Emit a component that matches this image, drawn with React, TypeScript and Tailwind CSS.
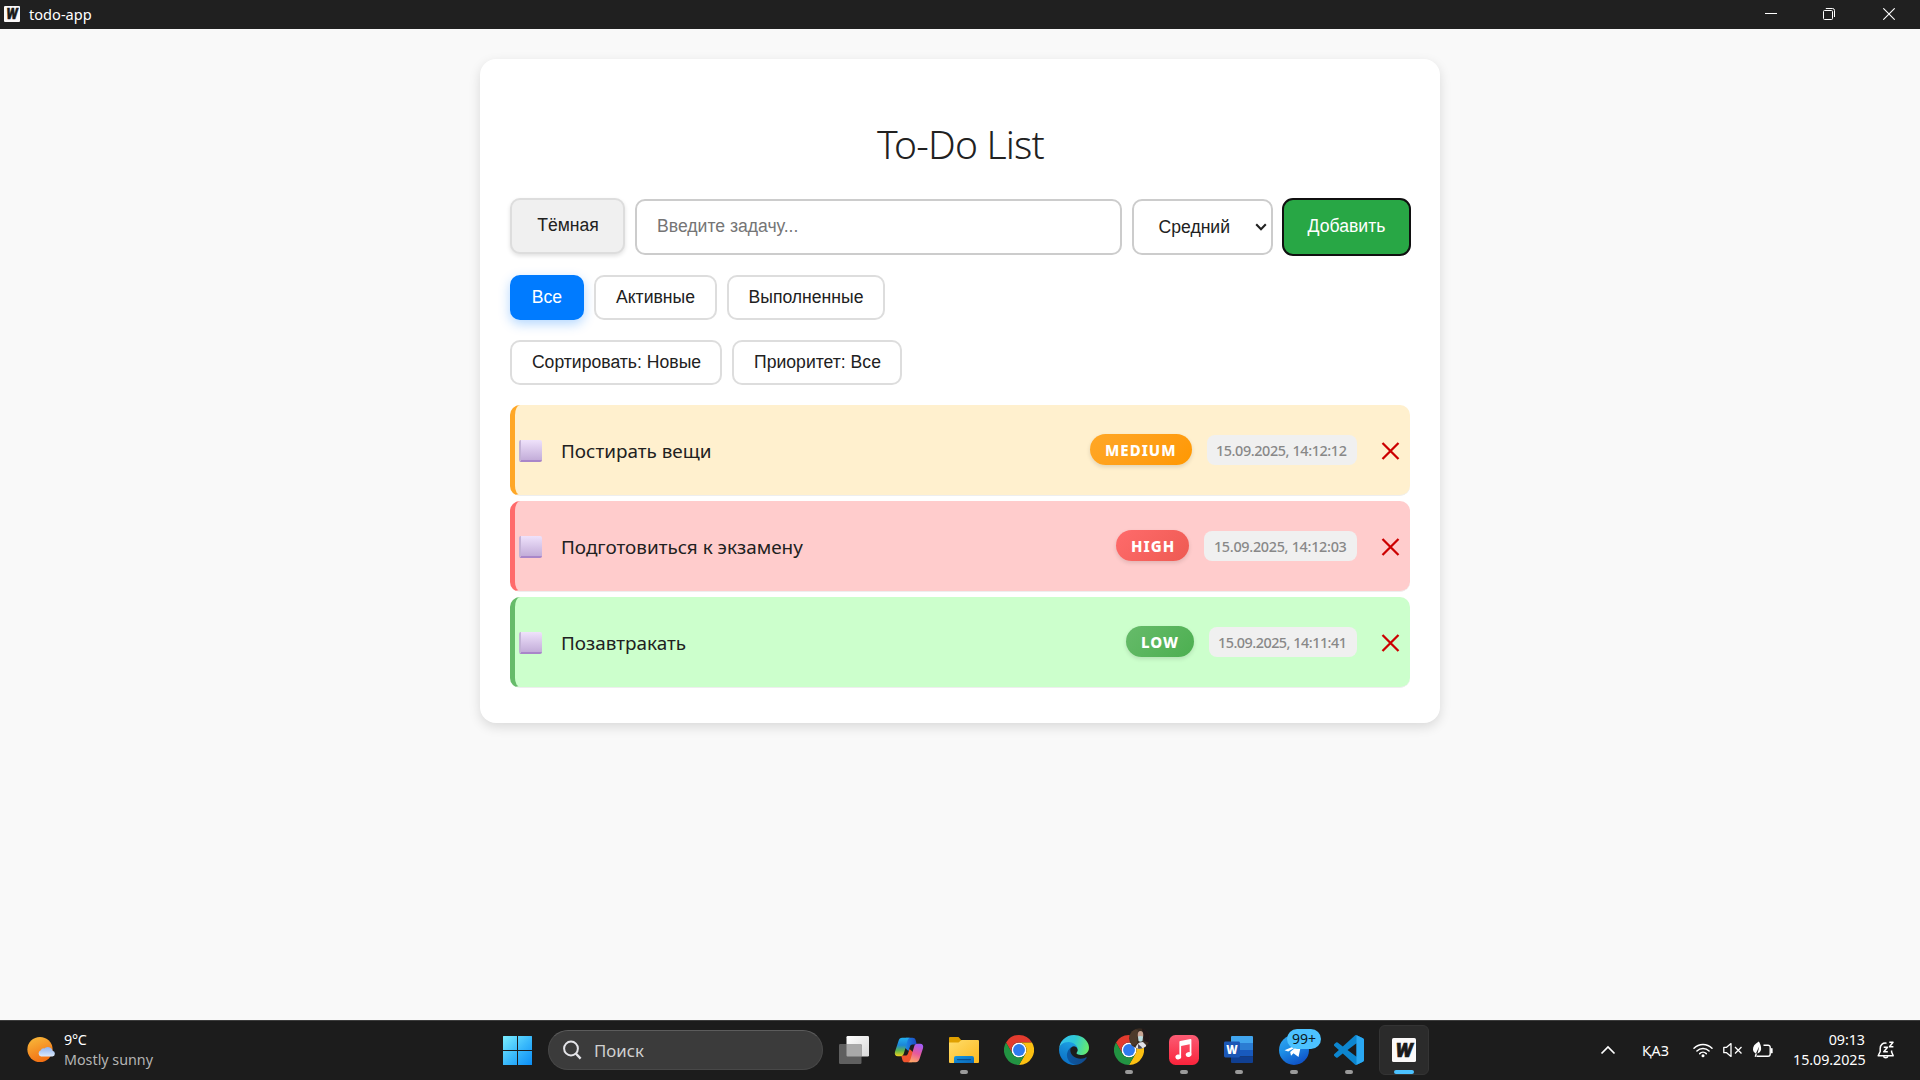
import type { ReactNode } from 'react';

type Task = {
  text: string;
  priority: string;
  date: string;
  row: string;
  badge: string;
  stamp: string;
};

const tasks: Task[] = [
  {
    text: 'Постирать вещи',
    priority: 'MEDIUM',
    date: '15.09.2025, 14:12:12',
    row: 'bg-[#fff0ce] border-l-[#ffa726]',
    badge: 'w-[102px] from-[#ffa726] to-[#ff9800] mr-[15px]',
    stamp: 'w-[150px] tracking-[-0.4px]',
  },
  {
    text: 'Подготовиться к экзамену',
    priority: 'HIGH',
    date: '15.09.2025, 14:12:03',
    row: 'bg-[#ffcccc] border-l-[#ff6b6b]',
    badge: 'w-[73px] from-[#ff6b6b] to-[#ee5a52] mr-[15px]',
    stamp: 'w-[153px] tracking-[-0.3px]',
  },
  {
    text: 'Позавтракать',
    priority: 'LOW',
    date: '15.09.2025, 14:11:41',
    row: 'bg-[#ccffcc] border-l-[#66bb6a]',
    badge: 'w-[68px] from-[#66bb6a] to-[#4caf50] mr-[15px]',
    stamp: 'w-[148px] tracking-[-0.5px]',
  },
];

function AppMark({ size }: { size: number }) {
  return (
    <svg width={size} height={size} viewBox="0 0 24 24">
      <rect width="24" height="24" rx="1.6" fill="#fbf9f9" />
      <text x="3.4" y="19.2" fontFamily="Roboto, sans-serif" fontSize="20.5" fontWeight="900" fontStyle="italic" textLength="17.4" lengthAdjust="spacingAndGlyphs" fill="#1a1a1a" stroke="#1a1a1a" strokeWidth="0.6">W</text>
    </svg>
  );
}

function TitleBar() {
  return (
    <header className="flex h-[29px] items-center bg-[#202020] text-white">
      <div className="ml-1 mt-[-1px]"><AppMark size={16} /></div>
      <span className="ml-[9px] pb-[2px] text-[14.6px] leading-[20px]">todo-app</span>
      <div className="ml-auto flex pb-px">
        <div className="grid w-[58px] place-items-center">
          <svg width="12" height="12" viewBox="0 0 12 12"><path d="M0 5.5H12" stroke="#fff" /></svg>
        </div>
        <div className="grid w-[58px] place-items-center">
          <svg width="12" height="12" viewBox="0 0 12 12" fill="none" stroke="#fff">
            <rect x="0.5" y="2.5" width="9" height="9" rx="1" />
            <path d="M2.8 0.5H9.5a2 2 0 0 1 2 2V9" />
          </svg>
        </div>
        <div className="grid w-[62px] place-items-center pr-px">
          <svg width="12" height="12" viewBox="0 0 12 12"><path d="M0.3 0.3L11.7 11.7M11.7 0.3L0.3 11.7" stroke="#fff" strokeWidth="1.1" /></svg>
        </div>
      </div>
    </header>
  );
}

function FilterButton({ children, className }: { children: ReactNode; className: string }) {
  return (
    <button className={`h-[45px] rounded-[10px] ${className}`}>{children}</button>
  );
}

function TaskRow({ task }: { task: Task }) {
  return (
    <li className={`flex h-[91px] items-center rounded-[10px] border-b border-l-[5px] border-b-[#eee] ${task.row}`}>
      <div className="mt-[2px] ml-1 h-[22px] w-[23px] rounded-[2px] border-b-2 border-l-2 border-b-[#a986c9] border-l-[#c3b2d6] bg-linear-to-b from-[#efe2fb] to-[#c3add9]" />
      <span className="mt-[2px] ml-[19px] text-[18.9px] leading-[26px]">{task.text}</span>
      <span className={`ml-auto mt-[-2px] flex h-[31px] items-center rounded-[16px] bg-linear-135 pt-[2px] pl-[15px] text-[15px] font-extrabold tracking-[1px] text-white shadow-[0_2px_4px_rgba(0,0,0,0.12)] ${task.badge}`}>
        {task.priority}
      </span>
      <span className={`mt-[-1px] flex h-[30px] items-center justify-end rounded-[8px] bg-[#f0f0f0] pt-[2px] pr-[10.5px] text-[14.4px] font-medium whitespace-nowrap text-[#888] ${task.stamp}`}>
        {task.date}
      </span>
      <svg className="mt-[2px] mr-[10px] ml-[24px]" width="19" height="18" viewBox="0 0 19 18">
        <path d="M1.5 1L17.5 17M17.5 1L1.5 17" stroke="#cc0000" strokeWidth="2.3" />
      </svg>
    </li>
  );
}

function TodoCard() {
  return (
    <section className="mx-auto mt-[30px] h-[664px] w-[960px] rounded-[16px] bg-white px-[30px] text-[#212121] shadow-[0_4px_12px_rgba(0,0,0,0.13)]">
      <h1 className="flex h-[139px] items-center justify-center pt-[32px] pl-px text-[39px] font-[270] tracking-[-0.8px]">To-Do List</h1>
      <div className="-mr-px flex h-[58px] font-['Liberation_Sans',Arial,sans-serif] text-[17.6px]">
        <button className="mr-[10px] h-[56px] w-[115px] rounded-[10px] border-2 border-[#ddd] bg-[#f0f0f0] pb-px pl-px shadow-[0_2px_4px_rgba(0,0,0,0.12)]">Тёмная</button>
        <input className="mt-px mr-[10px] h-14 w-[487px] rounded-[10px] border-2 border-[#ccc] px-5 pb-[2px] placeholder:text-[#757575] placeholder:opacity-100" placeholder="Введите задачу..." />
        <div className="mt-px mr-[9px] flex h-14 w-[141px] items-center rounded-[10px] border-2 border-[#ccc] pl-[24.5px]">
          <span>Средний</span>
          <svg className="mr-1 ml-auto" width="12" height="8" viewBox="0 0 12 8"><path d="M1.2 1.2L6 6.2L10.8 1.2" fill="none" stroke="#222" strokeWidth="2.1" /></svg>
        </div>
        <button className="h-[58px] w-[129px] rounded-[11px] border-2 border-[#101010] bg-[#28a745] pb-px text-white">Добавить</button>
      </div>
      <div className="mt-[19px] flex gap-[10px] font-['Liberation_Sans',Arial,sans-serif] text-[17.6px]">
        <FilterButton className="w-[74px] bg-[#007bff] text-white shadow-[0_4px_12px_rgba(0,123,255,0.3)]">Все</FilterButton>
        <FilterButton className="w-[123px] border-2 border-[#ddd]">Активные</FilterButton>
        <FilterButton className="w-[158px] border-2 border-[#ddd]">Выполненные</FilterButton>
      </div>
      <div className="mt-5 flex gap-[10px] font-['Liberation_Sans',Arial,sans-serif] text-[17.6px]">
        <FilterButton className="w-[212px] border-2 border-[#ddd] pl-px">Сортировать: Новые</FilterButton>
        <FilterButton className="w-[170px] border-2 border-[#ddd] pl-px">Приоритет: Все</FilterButton>
      </div>
      <ul className="mt-5 flex flex-col gap-[5px]">
        {tasks.map((t) => <TaskRow key={t.text} task={t} />)}
      </ul>
    </section>
  );
}

function Slot({ children, state = 'none' }: { children: ReactNode; state?: 'none' | 'open' | 'active' }) {
  return (
    <div className={state === 'active' ? 'relative grid h-[50px] w-[50px] place-items-center rounded-[6px] border border-[#343434] bg-[#2b2b2b]' : 'relative grid h-[50px] w-[50px] place-items-center'}>
      {children}
      {state === 'open' && <i className="absolute bottom-[1px] h-1 w-2 rounded-full bg-[#9a9a9a]" />}
      {state === 'active' && <i className="absolute bottom-0 h-1 w-5 rounded-full bg-[#4cc2ff]" />}
    </div>
  );
}

function ChromeIcon() {
  return (
    <svg width="30" height="30" viewBox="0 0 48 48">
      <circle cx="24" cy="24" r="12" fill="#fff" />
      <path d="M24 12H44.78a23.99 23.99 0 0 0-41.56 0L13.61 30A11.99 11.99 0 0 1 24 12Z" fill="#e33b2e" />
      <path d="M34.39 30L24 48A23.99 23.99 0 0 0 44.78 12H24A11.99 11.99 0 0 1 34.39 30Z" fill="#fcc012" />
      <path d="M13.61 30L3.22 12A23.99 23.99 0 0 0 24 48L34.39 30A11.99 11.99 0 0 1 13.61 30Z" fill="#229342" />
      <circle cx="24" cy="24" r="9.5" fill="#2f7bed" />
    </svg>
  );
}

function CopilotIcon() {
  return (
    <svg width="30" height="30" viewBox="0 0 30 30">
      <defs>
        <linearGradient id="cpA" x1="0" y1="0" x2="0" y2="1"><stop offset="0" stopColor="#22b0f0" /><stop offset=".4" stopColor="#1c86d8" /><stop offset=".7" stopColor="#5fb54b" /><stop offset="1" stopColor="#f3d01c" /></linearGradient>
        <linearGradient id="cpB" x1="0.6" y1="0" x2="0.3" y2="1"><stop offset="0" stopColor="#a35cf5" /><stop offset=".5" stopColor="#e8589a" /><stop offset="1" stopColor="#ffa868" /></linearGradient>
        <linearGradient id="cpC" x1="0" y1="0" x2="1" y2="0"><stop offset="0" stopColor="#1b8fe8" /><stop offset="1" stopColor="#1b49c4" /></linearGradient>
      </defs>
      <path d="M12 2.8H18.6c1.6 0 2.6.8 3 2.3L22.8 9.5H18.7c-1.5 0-2.3.8-2.8 2.3L14.5 16L10 12Z" fill="url(#cpC)" />
      <path d="M18 27.2H11.4c-1.6 0-2.6-.8-3-2.3L7.2 20.5H11.3c1.5 0 2.3-.8 2.8-2.3L15.5 14L20 18Z" fill="#f0542e" />
      <path d="M8.2 2.8H15.8c-1.3.5-1.9 1.6-2.4 3.2L10 18c-.6 2-1.5 3.2-3.5 3.2H4C1.3 21.2.3 19.2 1 16.7L4.5 5.9C5.1 4 6.3 2.8 8.2 2.8Z" fill="url(#cpA)" />
      <path d="M21.8 27.2H14.2c1.3-.5 1.9-1.6 2.4-3.2L20 12c.6-2 1.5-3.2 3.5-3.2H26c2.7 0 3.7 2 3 4.5L25.5 24.1C24.9 26 23.7 27.2 21.8 27.2Z" fill="url(#cpB)" />
    </svg>
  );
}

function EdgeIcon() {
  return (
    <svg width="30" height="30" viewBox="0 0 256 256">
      <defs>
        <linearGradient id="edA" x1="0" y1="0" x2="1" y2="0"><stop offset="0" stopColor="#0c59a4" /><stop offset="1" stopColor="#114a8b" /></linearGradient>
        <linearGradient id="edB" x1="0.6" y1="0.1" x2="0.3" y2="1"><stop offset="0" stopColor="#1b9de2" /><stop offset=".5" stopColor="#1383d0" /><stop offset="1" stopColor="#0a70c8" /></linearGradient>
        <linearGradient id="edC" x1="0" y1="0.3" x2="1" y2="0.5"><stop offset="0" stopColor="#35c1f1" /><stop offset=".5" stopColor="#2fc9d5" /><stop offset="1" stopColor="#66eb6e" /></linearGradient>
      </defs>
      <g transform="translate(-4.63 -4.92)">
        <path fill="url(#edA)" d="M235.68 195.46a93.73 93.73 0 0 1-10.54 4.71 101.87 101.87 0 0 1-35.9 6.46c-47.32 0-88.54-32.55-88.54-74.32A31.48 31.48 0 0 1 117.13 105c-42.8 1.8-53.8 46.4-53.8 72.53 0 73.88 68.09 81.37 82.76 81.37 7.91 0 19.84-2.3 27-4.56l1.31-.44a128.34 128.34 0 0 0 66.6-52.8 4 4 0 0 0-5.32-5.64z" />
        <path fill="url(#edB)" d="M110.34 246.34A79.2 79.2 0 0 1 87.6 225a80.72 80.72 0 0 1 29.53-120c3.12-1.47 8.45-4.05 15.54-4.05a32.35 32.35 0 0 1 25.69 13 31.88 31.88 0 0 1 6.36 18.66c0-.21 24.46-79.6-80-79.6-43.9 0-80 41.66-80 78.21a130.15 130.15 0 0 0 12.11 56 128 128 0 0 0 156.38 67.11 75.55 75.55 0 0 1-62.78-8z" />
        <path fill="url(#edC)" d="M156.94 153.78c-.81 1.05-3.3 2.5-3.3 5.66 0 2.61 1.7 5.12 4.72 7.23 14.38 10 41.49 8.68 41.56 8.68a59.56 59.56 0 0 0 30.27-8.35 61.38 61.38 0 0 0 30.43-52.88c.26-22.41-8-37.31-11.34-43.91C228.09 28.76 182.35 5 132.63 5a128 128 0 0 0-128 126.2c.48-36.54 36.8-66.05 80-66.05 3.5 0 23.46.34 42 10.07 16.34 8.58 24.9 18.94 30.85 29.21 6.18 10.67 7.28 24.15 7.28 29.52s-2.74 13.33-7.82 19.83z" />
      </g>
    </svg>
  );
}

function TaskbarApps() {
  return (
    <div className="ml-[6px] flex gap-[5px]">
      <Slot>
        <svg width="30" height="30" viewBox="0 0 30 30">
          <defs><linearGradient id="tv" x1="0" y1="0" x2="1" y2="1"><stop offset="0" stopColor="#fff" /><stop offset="1" stopColor="#d9d9d9" /></linearGradient></defs>
          <rect x="7.5" y="1" width="22.5" height="20.5" rx="1.2" fill="url(#tv)" />
          <rect x="0" y="9" width="22.5" height="20" rx="1.2" fill="#5f5f5f" />
          <path d="M7.5 9H21.5a1 1 0 0 1 1 1V21.5H8.5a1 1 0 0 1-1-1Z" fill="#a9a9a9" />
        </svg>
      </Slot>
      <Slot><CopilotIcon /></Slot>
      <Slot state="open">
        <svg width="30" height="30" viewBox="0 0 30 30">
          <defs>
            <linearGradient id="fo" x1="0" y1="0" x2="1" y2="1"><stop offset="0" stopColor="#ffdd6b" /><stop offset="1" stopColor="#fcb91f" /></linearGradient>
            <linearGradient id="fb" x1="0" y1="0" x2="1" y2="1"><stop offset="0" stopColor="#1798e0" /><stop offset="1" stopColor="#0a66b8" /></linearGradient>
          </defs>
          <path d="M0 3a1 1 0 0 1 1-1H9.5l3 3.5V9H0Z" fill="#e0a000" />
          <path d="M0 7.5H9.5L12.5 5H29a1 1 0 0 1 1 1V27a1 1 0 0 1-1 1H1a1 1 0 0 1-1-1Z" fill="url(#fo)" />
          <path d="M5 28V23a2 2 0 0 1 2-2H23a2 2 0 0 1 2 2V28Z" fill="url(#fb)" />
          <path d="M8.5 24.6H21.5" stroke="#0a4f8f" strokeWidth="1.2" strokeLinecap="round" />
        </svg>
      </Slot>
      <Slot><ChromeIcon /></Slot>
      <Slot><EdgeIcon /></Slot>
      <Slot state="open">
        <ChromeIcon />
        <svg className="absolute top-[3px] left-[25px]" width="21" height="21" viewBox="0 0 21 21">
          <defs><clipPath id="av"><circle cx="10.5" cy="10.5" r="10.3" /></clipPath></defs>
          <g clipPath="url(#av)">
            <rect width="21" height="21" fill="#3a2c22" />
            <path d="M0 5Q4 0 9 2L8 16L2 18Z" fill="#4d3a2a" />
            <path d="M13 0H21V15L15 13Z" fill="#22181a" />
            <ellipse cx="11.5" cy="7" rx="2.8" ry="4" fill="#c9a594" />
            <path d="M9 8.5Q11.5 7.5 14 8.5L13.5 13Q11.5 14.5 9.5 13Z" fill="#bcdce0" />
            <path d="M6 21Q7 16.5 10.5 14.5L14 14L17 17V21Z" fill="#e2e2e8" />
            <path d="M9 16L12 18.5L14 21H9Z" fill="#4b4b58" />
          </g>
        </svg>
      </Slot>
      <Slot state="open">
        <svg width="30" height="30" viewBox="0 0 30 30">
          <defs><linearGradient id="mu" x1="0" y1="0" x2="0" y2="1"><stop offset="0" stopColor="#fb5c74" /><stop offset="1" stopColor="#fa233b" /></linearGradient></defs>
          <rect width="30" height="30" rx="6.5" fill="url(#mu)" />
          <path d="M10.4 6.9a1 1 0 0 1 .8-1L21.5 4a.8.8 0 0 1 .9.8V19.5H20.7V9.2L12.1 11V21.7H10.4Z" fill="#fff" />
          <ellipse cx="9.3" cy="21.9" rx="2.9" ry="2.4" transform="rotate(-15 9.3 21.9)" fill="#fff" />
          <ellipse cx="19.6" cy="19.6" rx="2.9" ry="2.4" transform="rotate(-15 19.6 19.6)" fill="#fff" />
        </svg>
      </Slot>
      <Slot state="open">
        <svg width="30" height="30" viewBox="0 0 30 30">
          <path d="M7 2a1 1 0 0 1 1-1H28a1 1 0 0 1 1 1V8H7Z" fill="#41a5ee" />
          <path d="M7 8H29V15H7Z" fill="#2b7cd3" />
          <path d="M7 15H29V21.5H7Z" fill="#185abd" />
          <path d="M7 21.5H29V27a1 1 0 0 1-1 1H8a1 1 0 0 1-1-1Z" fill="#103f91" />
          <rect x="0" y="6.5" width="16" height="16" rx="1.4" fill="#1c57b5" />
          <text x="2.2" y="18.6" fontFamily="Open Sans, sans-serif" fontSize="11.5" fontWeight="800" textLength="11.4" lengthAdjust="spacingAndGlyphs" fill="#fff">W</text>
        </svg>
      </Slot>
      <Slot state="open">
        <svg width="30" height="30" viewBox="0 0 30 30">
          <defs><linearGradient id="tg" x1="0" y1="0" x2="0.5" y2="1"><stop offset="0" stopColor="#35aaf0" /><stop offset=".5" stopColor="#1d8ee6" /><stop offset="1" stopColor="#1056c9" /></linearGradient></defs>
          <circle cx="15" cy="15" r="15" fill="url(#tg)" />
          <path d="M5.5 15.2L22.5 8L19.5 22L14.5 18.3L12 20.7L11.2 16.9L17 12L9.2 16.5Z" fill="#fff" />
        </svg>
        <span className="absolute top-1 left-[18px] flex h-5 w-[34px] items-center justify-center rounded-full bg-[#4cc2ff] pb-px text-[14px] leading-[20px] text-[#0b1a24]">99+</span>
      </Slot>
      <Slot state="open">
        <svg width="30" height="30" viewBox="0 0 24 24">
          <path d="M23.15 2.587L18.21.21a1.494 1.494 0 0 0-1.705.29l-9.46 8.63-4.12-3.128a.999.999 0 0 0-1.276.057L.327 7.261A1 1 0 0 0 .326 8.74L3.899 12 .326 15.26a1 1 0 0 0 .001 1.479L1.65 17.94a.999.999 0 0 0 1.276.057l4.12-3.128 9.46 8.63a1.492 1.492 0 0 0 1.704.29l4.942-2.377A1.5 1.5 0 0 0 24 20.06V3.939a1.5 1.5 0 0 0-.85-1.352zm-5.146 14.861L10.826 12l7.178-5.448v10.896z" fill="#0d86cf" />
          <path d="M18 .15L23.15 2.587A1.5 1.5 0 0 1 24 3.94V20.06A1.5 1.5 0 0 1 23.15 21.4L18 23.85Z" fill="#2aa8f2" />
        </svg>
      </Slot>
      <Slot state="active"><AppMark size={24} /></Slot>
    </div>
  );
}

function Tray() {
  return (
    <div className="ml-auto flex h-full items-center text-[14.3px] leading-[20px] text-white">
      <svg width="16" height="10" viewBox="0 0 16 10"><path d="M1.5 8.5L8 2L14.5 8.5" fill="none" stroke="#fff" strokeWidth="1.7" /></svg>
      <span className="mt-px ml-[26px] w-[28px] whitespace-nowrap">ҚАЗ</span>
      <svg className="ml-[23px]" width="20" height="16" viewBox="0 0 20 16" fill="none" stroke="#fff" strokeWidth="1.5" strokeLinecap="round">
        <path d="M1 6.2a12.7 12.7 0 0 1 18 0" />
        <path d="M3.9 9a8.6 8.6 0 0 1 12.2 0" />
        <path d="M6.7 11.6a4.7 4.7 0 0 1 6.6 0" />
        <circle cx="10" cy="13.8" r="1.5" fill="#fff" stroke="none" />
      </svg>
      <svg className="ml-[10px]" width="20" height="16" viewBox="0 0 20 16" fill="none" stroke="#fff" strokeWidth="1.3" strokeLinejoin="round">
        <path d="M.8 5.3H3.6L8 1.6V14.4L3.6 10.7H.8Z" />
        <path d="M12 5L18.5 11.5M18.5 5L12 11.5" />
      </svg>
      <svg className="ml-[9px]" width="22" height="18" viewBox="0 0 22 18" fill="none" stroke="#fff" strokeWidth="1.4">
        <path d="M11.5 4.2H16a2.2 2.2 0 0 1 2.2 2.2V13.1A2.2 2.2 0 0 1 16 15.3H4.5" />
        <path d="M19 7.5H20.3V12H19Z" fill="#fff" strokeWidth=".6" />
        <path d="M6.8.5C2.5 3 .8 5.6 1 8.6c.2 2 1.3 3.4 2.9 3.8C5 10 6 8 7.2 5.5C6.6 8.5 6 10.5 5.4 12.5C8.5 11.5 9.6 9 9 6C8.7 4 8 2.2 6.8.5Z" fill="#fff" stroke="none" />
        <path d="M4.4 12.5L3.2 15.8" />
      </svg>
      <div className="ml-[19px] w-[72px] text-right tracking-[-0.05px]">
        <div>09:13</div>
        <div>15.09.2025</div>
      </div>
      <svg className="mr-[25px] ml-[12px]" width="18" height="19" viewBox="0 0 18 19" fill="none" stroke="#fff" strokeWidth="1.5" strokeLinejoin="round">
        <path d="M9.5 2.2C5.5 1.6 3.2 4.2 3.2 7.5V10.5L1.2 14.8H16.2L14.6 11V9.5" />
        <path d="M6.5 15.2a2.3 2.3 0 0 0 4.4 0" />
        <path d="M6.7 6.2H10.5L6.8 10.8H10.8" />
        <path d="M12.3 1.2H16L12.5 5.8H16.4" />
      </svg>
    </div>
  );
}

function Taskbar() {
  return (
    <footer className="flex h-[60px] items-center border-t border-[#3c3c3c] bg-[#1c1c1c] pb-px">
      <div className="flex w-[493px] items-center">
        <svg className="mb-px ml-[27px]" width="29" height="27" viewBox="0 0 29 27">
          <defs>
            <linearGradient id="sun" x1="0.2" y1="0" x2="0.6" y2="1"><stop offset="0" stopColor="#f8b83a" /><stop offset="1" stopColor="#f26d12" /></linearGradient>
            <linearGradient id="cl" x1="0" y1="0" x2="0" y2="1"><stop offset="0" stopColor="#8fb3f0" /><stop offset="1" stopColor="#dce9fb" /></linearGradient>
          </defs>
          <circle cx="13" cy="13.5" r="12.6" fill="url(#sun)" />
          <path d="M14 20.5a3.3 3.3 0 0 1-.2-6.3a3 3 0 0 1 3.5-1.8a5 5 0 0 1 8.3 2.4a2.9 2.9 0 0 1-.2 5.7Z" fill="url(#cl)" />
        </svg>
        <div className="ml-2 text-[14.3px] leading-[20px] text-white">
          <div className="tracking-[-0.3px]">9°C</div>
          <div className="text-[#b4b4b4]">Mostly sunny</div>
        </div>
      </div>
      <Slot>
        <svg width="30" height="30" viewBox="0 0 30 30">
          <defs><linearGradient id="win" gradientUnits="userSpaceOnUse" x1="0" y1="0" x2="30" y2="30"><stop offset="0" stopColor="#7df0ff" /><stop offset=".55" stopColor="#36b6fb" /><stop offset="1" stopColor="#0a8cf5" /></linearGradient></defs>
          <path d="M0 1.5A.5.5 0 0 1 .5 1H14V15H0ZM15 1H28.5a.5.5 0 0 1 .5.5V15H15ZM0 16H14V30H.5a.5.5 0 0 1-.5-.5ZM15 16H29V29.5a.5.5 0 0 1-.5.5H15Z" fill="url(#win)" />
        </svg>
      </Slot>
      <div className="ml-[5px] flex h-10 w-[275px] items-center rounded-full border border-[#484848] border-t-[#5c5c5c] bg-[#3b3b3b]">
        <svg className="ml-[13px]" width="20" height="20" viewBox="0 0 20 20" fill="none" stroke="#e4e4e8" strokeWidth="2">
          <circle cx="9" cy="8.5" r="6.9" />
          <path d="M13.8 13.5L18.6 18.6" strokeWidth="2.4" />
        </svg>
        <span className="mt-px ml-[12px] text-[16.8px] leading-[24px] text-[#d0d0d0]">Поиск</span>
      </div>
      <TaskbarApps />
      <Tray />
    </footer>
  );
}

export default function App() {
  return (
    <div className="flex h-[1080px] w-[1920px] flex-col overflow-hidden bg-[#f9f9f9] font-['Noto_Sans',sans-serif]">
      <TitleBar />
      <main className="flex-1"><TodoCard /></main>
      <Taskbar />
    </div>
  );
}
